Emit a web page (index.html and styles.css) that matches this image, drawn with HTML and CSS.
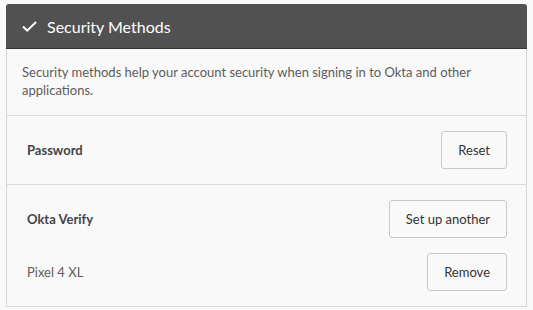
FILE: index.html
```html
<!DOCTYPE html>
<html>
<head>
<meta charset="utf-8">
<link rel="stylesheet" href="styles.css">
</head>
<body>
<section class="card">
  <header class="card-header">
    <svg class="check" width="15" height="11" viewBox="0 0 15 11"><path d="M1 5.5 L5.2 9.6 L14 1" fill="none" stroke="#fff" stroke-width="2"/></svg>
    <h2 class="title">Security Methods</h2>
  </header>
  <p class="desc">Security methods help your account security when signing in to Okta and other applications.</p>
  <div class="method">
    <div class="row">
      <span class="label strong">Password</span>
      <button class="btn">Reset</button>
    </div>
  </div>
  <div class="method">
    <div class="row">
      <span class="label strong">Okta Verify</span>
      <button class="btn">Set up another</button>
    </div>
    <div class="row">
      <span class="label">Pixel 4 XL</span>
      <button class="btn">Remove</button>
    </div>
  </div>
</section>
</body>
</html>
```
FILE: styles.css
```css
html, body {
  margin: 0;
  padding: 0;
  background: #f9f9f9;
}
body {
  padding: 4px 0 0 6px;
  font-family: Lato, "Liberation Sans", sans-serif;
  color: #333;
}
.card {
  width: 521px;
  box-sizing: border-box;
  border: 1px solid #d6d6d6;
  border-top: none;
  background: #f9f9f9;
  border-radius: 3px 3px 0 0;
}
.card-header {
  height: 44px;
  margin: 0 -1px;
  background: #515151;
  border-bottom: 1px solid #333;
  border-radius: 3px 3px 0 0;
  display: flex;
  align-items: center;
  padding-left: 16px;
  gap: 10px;
}
.check {
  display: block;
  margin-top: 1px;
}
.title {
  margin: 0;
  color: #fff;
  font-size: 16px;
  font-weight: 400;
}
.desc {
  margin: 0;
  padding: 14px 15px 16px;
  font-size: 13px;
  line-height: 18px;
  color: #5c5c5c;
  border-bottom: 1px solid #d9d9d9;
}
.method {
  padding: 15px 19px 15px 20px;
  display: flex;
  flex-direction: column;
  gap: 15px;
}
.method + .method {
  border-top: 1px solid #d9d9d9;
}
.row {
  display: flex;
  align-items: center;
  justify-content: space-between;
}
.label {
  font-size: 13px;
  color: #5c5c5c;
}
.label.strong {
  font-weight: 700;
  color: #444;
}
.btn {
  height: 38px;
  box-sizing: border-box;
  padding: 0 16px;
  font-family: inherit;
  font-size: 13px;
  color: #333;
  background: #f9f9f9;
  border: 1px solid #c8c8c8;
  border-radius: 3px;
}
```
